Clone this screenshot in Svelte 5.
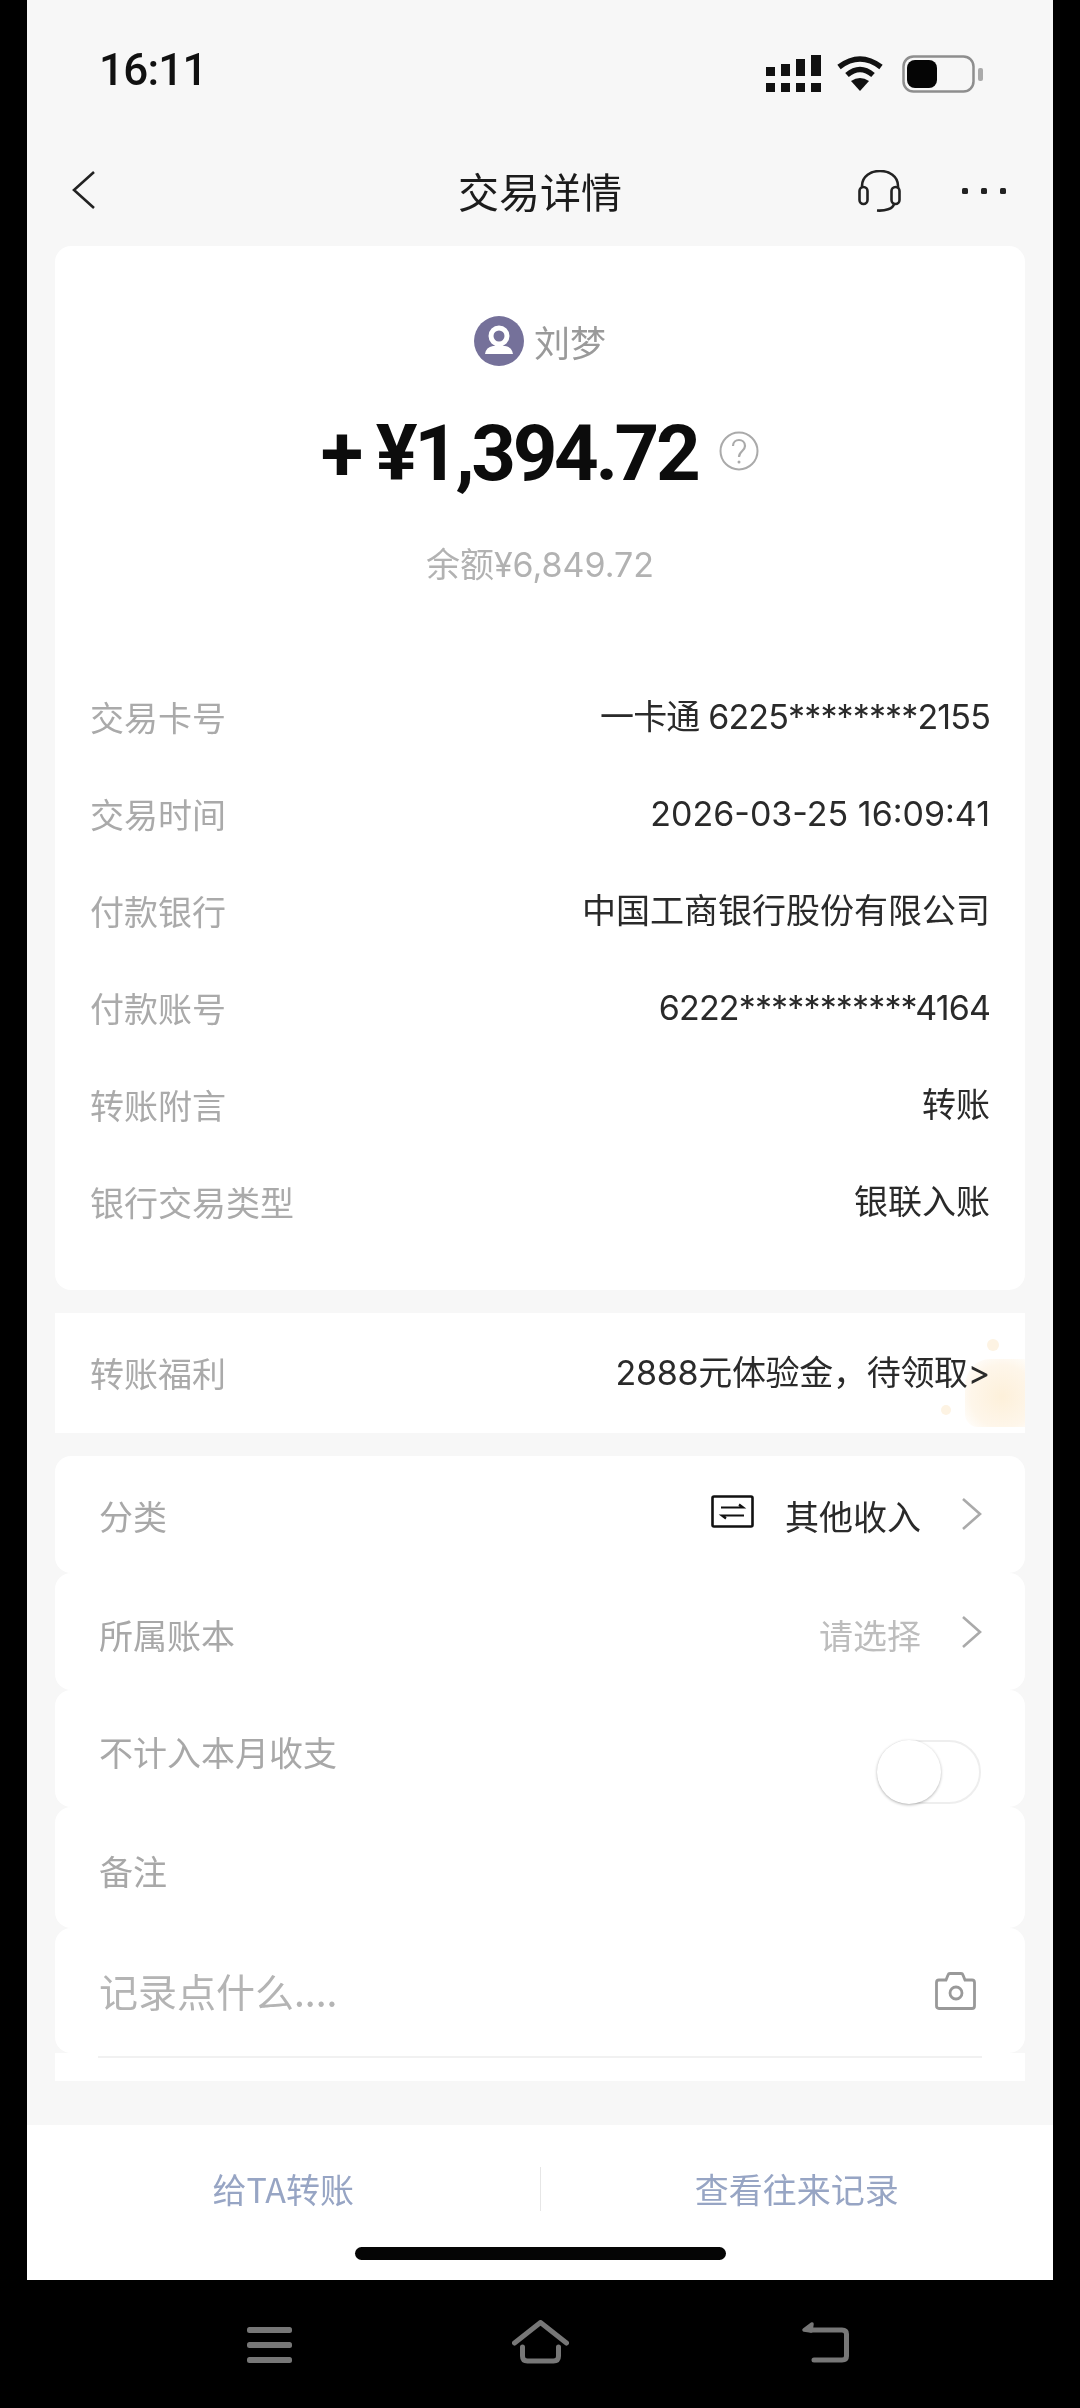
<script>
  const rows = [
    ['交易卡号', '一卡通 6225********2155'],
    ['交易时间', '2026-03-25 16:09:41'],
    ['付款银行', '中国工商银行股份有限公司'],
    ['付款账号', '6222***********4164'],
    ['转账附言', '转账'],
    ['银行交易类型', '银联入账']
  ];
</script>

<div class="device">
  <div class="screen">
    <div class="status">
      <span class="time">16:11</span>
      <div class="status-icons">
        <svg width="55" height="37" viewBox="0 0 55 37" fill="#111">
          <rect x="0" y="12" width="9" height="9"/><rect x="15" y="9" width="9" height="12"/><rect x="30" y="4" width="9" height="17"/><rect x="45" y="0" width="10" height="21"/>
          <rect x="0" y="28" width="9" height="9"/><rect x="15" y="28" width="9" height="9"/><rect x="30" y="28" width="9" height="9"/><rect x="45" y="28" width="10" height="9"/>
        </svg>
        <svg width="46" height="35" viewBox="0 0 46 35" fill="none" stroke="#111" stroke-width="5.5">
          <path d="M2 11 Q23 -5 44 11"/><path d="M10 19 Q23 8 36 19"/><path d="M23 35 L14 25 Q23 19 32 25 Z" fill="#111" stroke="none"/>
        </svg>
        <svg width="81" height="38" viewBox="0 0 81 38" fill="none">
          <rect x="1.5" y="1.5" width="70" height="35" rx="10" stroke="#8e8e8e" stroke-width="2.5"/>
          <rect x="5" y="5" width="30" height="28" rx="8" fill="#050505"/>
          <rect x="76" y="13" width="5" height="13" rx="2" fill="#aaa"/>
        </svg>
      </div>
    </div>

    <div class="nav">
      <svg class="back" width="23" height="38" viewBox="0 0 23 38" fill="none" stroke="#222" stroke-width="2.6"><path d="M22 1 L2 19 L22 37"/></svg>
      <span class="title">交易详情</span>
      <div class="nav-right">
        <svg width="44" height="42" viewBox="0 0 44 42" fill="none" stroke="#222" stroke-width="2.6">
          <path d="M4 18 V16 C4 -4 40 -4 40 16 V18"/>
          <rect x="1.5" y="17" width="8" height="17" rx="4"/><rect x="33.5" y="17" width="8" height="17" rx="4"/>
          <path d="M36 34 C35 39 27 41 19 40.5"/>
        </svg>
        <div class="dots"><i></i><i></i><i></i></div>
      </div>
    </div>

    <main class="content">
      <section class="card summary">
        <div class="payer">
          <svg width="50" height="50" viewBox="0 0 50 50">
            <circle cx="25" cy="25" r="25" fill="#75719a"/>
            <circle cx="25" cy="20" r="8" fill="none" stroke="#fff" stroke-width="5"/>
            <path d="M11 38 Q12 31 19 30 L31 30 Q38 31 39 38 Z" fill="#fff"/>
          </svg>
          <span>刘梦</span>
        </div>
        <div class="amount">
          <span class="money">+ ¥1,394.72</span>
          <svg class="help" width="40" height="40" viewBox="0 0 40 40" fill="none" stroke="#aaa" stroke-width="2">
            <circle cx="20" cy="20" r="18.5"/>
            <path d="M14 15 C14 7 26 7 26 15 C26 20 20 20 20 26" stroke-width="2.2"/>
            <circle cx="20" cy="31" r="1.5" fill="#aaa" stroke="none"/>
          </svg>
        </div>
        <div class="balance">余额¥6,849.72</div>
        <div class="rows">
          {#each rows as [label, value]}
            <div class="row"><span class="label">{label}</span><span class="value" class:masked={value.includes('*')}>{value}</span></div>
          {/each}
        </div>
      </section>

      <section class="perk">
        <span class="label">转账福利</span>
        <span class="value perk-value">2888元体验金，待领取&gt;</span>
        <div class="glow"></div>
        <div class="spark one"></div>
        <div class="spark two"></div>
      </section>

      <section class="settings">
        <div class="set-row first">
          <span class="set-label">分类</span>
          <div class="set-right">
            <svg class="cat" width="43" height="33" viewBox="0 0 43 33" fill="none" stroke="#111" stroke-width="2.6">
              <rect x="1.5" y="1.5" width="40" height="30" rx="1.5"/>
              <path d="M10 12.5 H32 L28 9.5" stroke-width="2.2"/><path d="M33 20.5 H11 L15 23.5" stroke-width="2.2"/>
            </svg>
            <span class="cat-text">其他收入</span>
            <svg class="chev" width="21" height="32" viewBox="0 0 21 32" fill="none" stroke="#aaa" stroke-width="2.6"><path d="M2 1 L19 16 L2 31"/></svg>
          </div>
        </div>
        <div class="set-row">
          <span class="set-label">所属账本</span>
          <div class="set-right">
            <span class="hint">请选择</span>
            <svg class="chev" width="21" height="32" viewBox="0 0 21 32" fill="none" stroke="#aaa" stroke-width="2.6"><path d="M2 1 L19 16 L2 31"/></svg>
          </div>
        </div>
        <div class="set-row toggle-row">
          <span class="set-label">不计入本月收支</span>
          <div class="toggle"><div class="knob"></div></div>
        </div>
        <div class="set-row tall">
          <span class="set-label">备注</span>
        </div>
        <div class="set-row note">
          <span class="placeholder">记录点什么....</span>
          <svg class="camera" width="41" height="38" viewBox="0 0 41 38" fill="none" stroke="#999" stroke-width="2.8">
            <path d="M4 8 H11 L13 3 Q13.5 1.5 15 1.5 H26 Q27.5 1.5 28 3 L30 8 H37 Q39.5 8 39.5 10.5 V34 Q39.5 36.5 37 36.5 H4 Q1.5 36.5 1.5 34 V10.5 Q1.5 8 4 8 Z"/>
            <circle cx="21" cy="21" r="6"/>
          </svg>
        </div>
        <div class="set-end"><div class="hr"></div></div>
      </section>
    </main>

    <footer class="footer">
      <div class="actions">
        <span class="action">给TA转账</span>
        <span class="divider"></span>
        <span class="action">查看往来记录</span>
      </div>
      <div class="home-bar"></div>
    </footer>
  </div>

  <div class="sysnav">
    <svg width="45" height="44" viewBox="0 0 45 44" fill="#777">
      <rect x="0" y="7" width="45" height="6" rx="2.5"/><rect x="0" y="22" width="45" height="6" rx="2.5"/><rect x="0" y="37" width="45" height="6" rx="2.5"/>
    </svg>
    <svg width="57" height="44" viewBox="0 0 57 44" fill="none" stroke="#777" stroke-width="5" stroke-linecap="round" stroke-linejoin="round">
      <path d="M2.5 23 L28.5 2.5 L54.5 23"/><path d="M10.5 27 V36 Q10.5 41 15.5 41 H41.5 Q46.5 41 46.5 36 V27"/>
    </svg>
    <svg width="48" height="44" viewBox="0 0 48 44" fill="none" stroke="#777" stroke-width="5" stroke-linecap="round" stroke-linejoin="round">
      <path d="M10 10 H41 Q45.5 10 45.5 14 V36 Q45.5 40 41 40 H13"/>
      <path d="M11 4 L3 10 L10 11 Z" fill="#777" stroke-width="3.5"/>
    </svg>
  </div>
</div>

<style>
  :global(body) { margin: 0; background: #000; }
  .device {
    width: 1080px;
    height: 2408px;
    background: #000;
    display: flex;
    flex-direction: column;
    font-family: "Noto Sans CJK SC", "Noto Sans", sans-serif;
    overflow: hidden;
  }
  .screen {
    margin: 0 27px;
    height: 2280px;
    background: #f7f7f7;
    display: flex;
    flex-direction: column;
    filter: blur(0.5px);
  }
  .status {
    height: 140px;
    flex: none;
    display: flex;
    align-items: center;
    justify-content: space-between;
    padding: 0 70px 0 72px;
  }
  .time { font: 500 44px/1 Roboto, sans-serif; color: #111; letter-spacing: -0.8px; }
  .status-icons { display: flex; align-items: center; gap: 16px; margin-top: 7px; }
  .status-icons svg:nth-child(3) { margin-left: 3px; }
  .nav {
    height: 100px;
    flex: none;
    position: relative;
    display: flex;
    align-items: center;
    justify-content: center;
  }
  .back { position: absolute; left: 45px; top: 31px; }
  .title { font-size: 41px; font-weight: 400; color: #1c1c1c; line-height: 1; }
  .nav-right { position: absolute; right: 47px; top: 30px; display: flex; align-items: center; gap: 60px; }
  .dots { display: flex; gap: 13px; }
  .dots i { width: 6px; height: 6px; border-radius: 1.5px; background: #222; display: block; }
  .content {
    flex: 1;
    padding: 6px 28px 0;
    display: flex;
    flex-direction: column;
    gap: 23px;
  }
  .card { background: #fff; border-radius: 16px; height: 1044px; padding-top: 70px; box-sizing: border-box; }
  .payer { display: flex; align-items: center; justify-content: center; gap: 10px; height: 50px; }
  .payer span { font-size: 36px; color: #9a9a9a; line-height: 1; }
  .amount { display: flex; align-items: center; justify-content: center; gap: 22px; margin-top: 43px; height: 90px; }
  .money { font: 700 78px/1 Roboto, sans-serif; color: #0c0c0c; letter-spacing: -3.4px; white-space: pre; }
  .help { margin-top: -6px; }
  .balance { text-align: center; font-family: Inter, "Noto Sans CJK SC", sans-serif; font-size: 34px; color: #b2b2b2; line-height: 1; margin-top: 49px; }
  .rows { margin-top: 86px; padding: 0 35px; }
  .row { height: 97px; display: flex; align-items: center; justify-content: space-between; }
  .label { font-size: 34px; color: #aaa; line-height: 1; }
  .value { font-family: Inter, "Noto Sans CJK SC", sans-serif; font-size: 34px; color: #2a2a2a; line-height: 1; }
  .value.masked { letter-spacing: -0.85px; }
  .perk-value { letter-spacing: -0.3px; }
  .perk {
    position: relative;
    height: 120px;
    flex: none;
    background: #fff;
    display: flex;
    align-items: center;
    justify-content: space-between;
    padding: 0 35px;
    overflow: hidden;
  }
  .glow {
    position: absolute;
    right: -2px;
    top: 46px;
    width: 62px;
    height: 68px;
    border-radius: 40% 0 0 20%;
    background: radial-gradient(circle at 60% 55%, #fdf0da 0%, #fef6ea 60%, rgba(255, 255, 255, 0) 92%);
  }
  .spark { position: absolute; border-radius: 50%; background: #fdf3e3; }
  .spark.one { right: 26px; top: 26px; width: 12px; height: 12px; }
  .spark.two { right: 74px; top: 92px; width: 10px; height: 10px; }
  .perk .value { position: relative; z-index: 1; }
  .settings { display: flex; flex-direction: column; }
  .set-row {
    height: 117px;
    flex: none;
    background: #fff;
    border-radius: 16px;
    display: flex;
    align-items: center;
    justify-content: space-between;
    padding: 6px 43px 0 44px;
    box-sizing: border-box;
  }
  .set-row.first { padding-top: 3px; }
  .set-row.tall { height: 121px; }
  .set-row.note { height: 125px; padding-top: 0; }
  .set-label { font-size: 34px; color: #a8a8a8; line-height: 1; }
  .set-right { display: flex; align-items: center; }
  .cat { margin-top: -10px; margin-right: 31px; }
  .cat-text { font-size: 34px; color: #2a2a2a; line-height: 1; }
  .hint { font-size: 34px; color: #bdbdbd; line-height: 1; }
  .chev { margin-left: 40px; margin-top: -5px; }
  .toggle {
    position: relative;
    width: 104px;
    height: 64px;
    margin: 40px 1px 0 0;
    border: 2px solid #eee;
    border-radius: 33px;
    box-sizing: border-box;
  }
  .knob {
    position: absolute;
    left: -2px;
    top: -2px;
    width: 64px;
    height: 64px;
    border-radius: 50%;
    background: #fff;
    box-shadow: 0 1px 3px rgba(0, 0, 0, 0.3);
  }
  .placeholder { font-size: 39px; color: #b4b4b4; line-height: 1; }
  .camera { margin-right: 6px; }
  .set-end { height: 28px; background: #fff; padding: 3px 43px 0; box-sizing: border-box; }
  .hr { height: 2px; background: #f1f1f1; }
  .footer { height: 155px; flex: none; background: #fff; display: flex; flex-direction: column; align-items: center; }
  .actions { width: 100%; display: flex; align-items: center; height: 122px; padding-top: 5px; box-sizing: border-box; }
  .action { flex: 1; text-align: center; font-size: 34px; color: #97a5c4; line-height: 1; }
  .divider { width: 1px; height: 44px; background: #e6e6e6; flex: none; }
  .home-bar { width: 371px; height: 13px; background: #050505; border-radius: 7px; }
  .sysnav { flex: 1; display: flex; align-items: flex-start; padding: 40px 0 0 247px; }
  .sysnav svg:nth-child(2) { margin-left: 220px; }
  .sysnav svg:nth-child(3) { margin-left: 232px; }
</style>
